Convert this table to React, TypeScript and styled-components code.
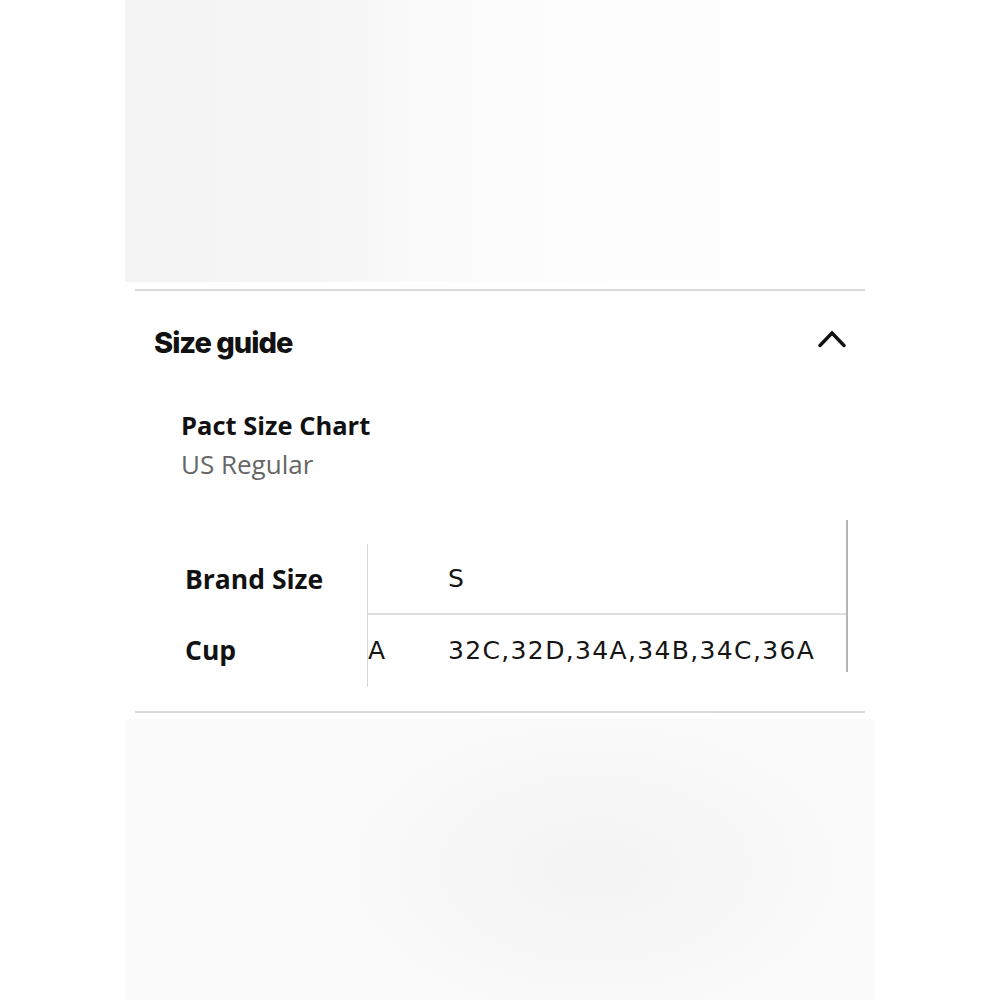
import React from 'react';
import styled, { createGlobalStyle } from 'styled-components';

const GlobalStyle = createGlobalStyle`
  body {
    margin: 0;
    background: #ffffff;
    font-family: 'Open Sans', 'Liberation Sans', sans-serif;
    color: #111111;
  }
`;

const Page = styled.div`
  width: 1000px;
  height: 1000px;
  display: flex;
  flex-direction: column;
  overflow: hidden;
`;

const Backdrop = styled.div<{ $bottom?: boolean }>`
  margin-left: 125px;
  width: 750px;
  height: 283px;
  margin-top: ${p => (p.$bottom ? '6px' : '0')};
  background: ${p =>
    p.$bottom
      ? 'radial-gradient(ellipse 300px 180px at 470px 150px, #f3f3f3 0%, #f7f7f7 45%, #fbfbfb 100%)'
      : 'linear-gradient(90deg, #f4f4f4 0%, #f5f5f5 25%, #fbfbfb 42%, #fdfdfd 60%, #fefefe 100%)'};
`;

const Panel = styled.section`
  margin: 7px 0 0 135px;
  width: 730px;
  border-top: 2px solid #dadada;
  border-bottom: 2px solid #dadada;
  padding-bottom: 24px;
`;

const Header = styled.div`
  height: 104px;
  padding: 0 19px;
  display: flex;
  align-items: center;
  justify-content: space-between;
`;

const Heading = styled.h2`
  margin: 0;
  font-family: Inter, 'Liberation Sans', sans-serif;
  font-weight: 800;
  font-size: 29px;
  letter-spacing: -1px;
  color: #111111;
`;

const Chevron = styled.svg`
  width: 28px;
  height: 18px;
  margin-top: -7px;
`;

const Chart = styled.div`
  margin: 11px 0 0 46px;
`;

const ChartTitle = styled.div`
  font-size: 25.5px;
  line-height: 39px;
  font-weight: 700;
  color: #111111;
`;

const ChartSub = styled.div`
  font-size: 26px;
  line-height: 39px;
  color: #666666;
`;

const Table = styled.div`
  margin: 60px 0 0 50px;
  display: flex;
  align-items: flex-start;
`;

const Labels = styled.div`
  width: 182px;
  display: flex;
  flex-direction: column;
`;

const Label = styled.div<{ $h: number }>`
  height: ${p => p.$h}px;
  display: flex;
  align-items: center;
  font-size: 26.5px;
  font-weight: 700;
`;

const Values = styled.div`
  width: 478px;
  border-left: 1px solid #d6d6d6;
  display: flex;
  flex-direction: column;
`;

const ValueRow = styled.div<{ $h: number; $divider?: boolean }>`
  height: ${p => p.$h}px;
  display: flex;
  align-items: center;
  box-sizing: border-box;
  font-family: 'DejaVu Sans', 'Open Sans', sans-serif;
  font-size: 25px;
  color: #151515;
  ${p => (p.$divider ? 'border-bottom: 2px solid #dddddd;' : '')}
`;

const Cell = styled.div<{ $w?: number }>`
  ${p => (p.$w ? `width: ${p.$w}px;` : 'flex: 1;')}
  white-space: nowrap;
  letter-spacing: 1.35px;
`;

const ScrollEdge = styled.div`
  width: 2px;
  height: 152px;
  margin-top: -24px;
  background: #b4b4b4;
`;

export default function App() {
  return (
    <>
      <GlobalStyle />
      <Page>
        <Backdrop />
        <Panel>
          <Header>
            <Heading>Size guide</Heading>
            <Chevron viewBox="0 0 28 18" fill="none">
              <polyline points="2,15.5 14,3 26,15.5" stroke="#111" strokeWidth="3.4" strokeLinecap="round" strokeLinejoin="miter" />
            </Chevron>
          </Header>
          <Chart>
            <ChartTitle>Pact Size Chart</ChartTitle>
            <ChartSub>US Regular</ChartSub>
          </Chart>
          <Table>
            <Labels>
              <Label $h={70}>Brand Size</Label>
              <Label $h={72}>Cup</Label>
            </Labels>
            <Values>
              <ValueRow $h={71} $divider>
                <Cell $w={80} />
                <Cell>S</Cell>
              </ValueRow>
              <ValueRow $h={72}>
                <Cell $w={80}>A</Cell>
                <Cell>32C,32D,34A,34B,34C,36A</Cell>
              </ValueRow>
            </Values>
            <ScrollEdge />
          </Table>
        </Panel>
        <Backdrop $bottom />
      </Page>
    </>
  );
}
